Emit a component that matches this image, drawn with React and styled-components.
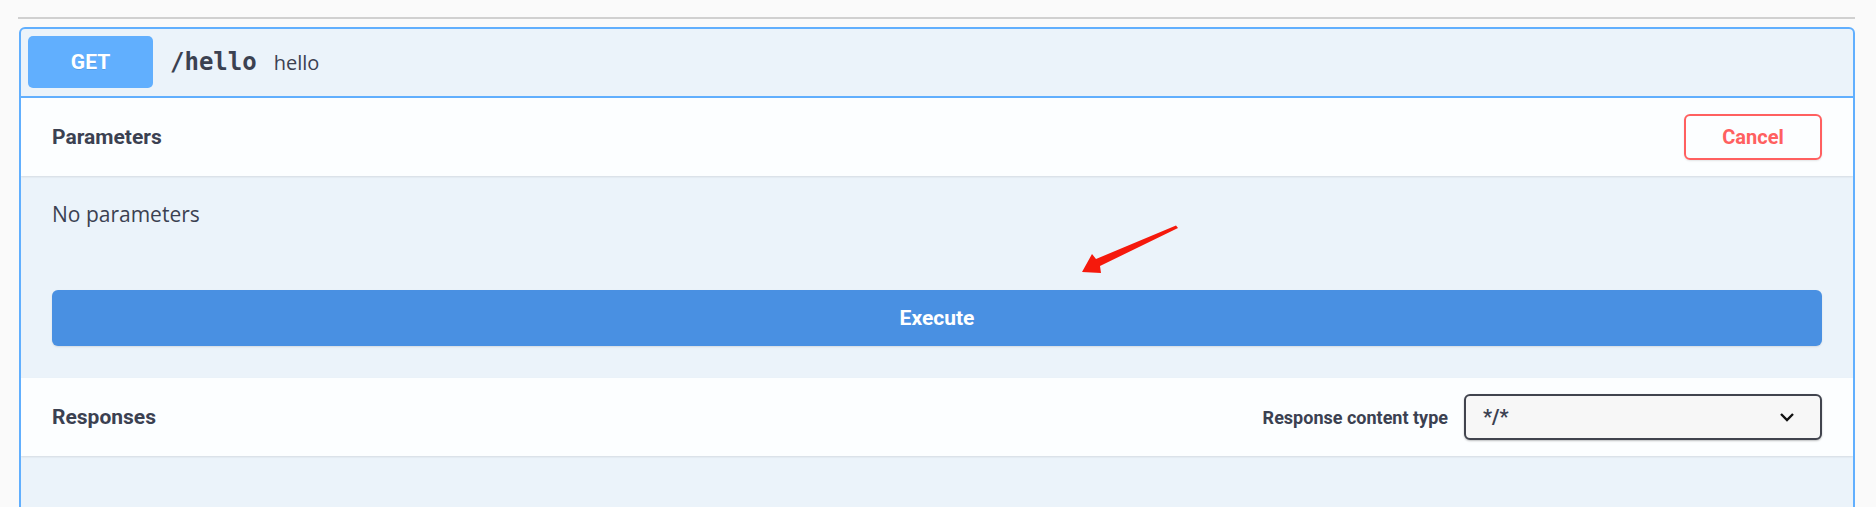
import React from 'react'
import styled, { createGlobalStyle } from 'styled-components'

const GlobalStyle = createGlobalStyle`
  html, body {
    margin: 0;
    padding: 0;
    background: #fafafa;
  }
`;

const Page = styled.div`
  position: relative;
  padding: 17px 21px 0 18px;
  height: 507px;
  box-sizing: border-box;
  overflow: hidden;
  font-family: "Open Sans", sans-serif;
  color: #3b4151;
`;

const Divider = styled.div`
  height: 2px;
  background: #d0d0d0;
`;

const Opblock = styled.div`
  margin: 8px 0 0 1px;
  border: 2px solid #61affe;
  border-radius: 6px;
  background: #ebf3fa;
  height: 600px;
  overflow: hidden;
`;

const Summary = styled.div`
  display: flex;
  align-items: center;
  padding: 7px 7px 8px;
  border-bottom: 2px solid #61affe;
`;

const Method = styled.span`
  display: flex;
  align-items: center;
  justify-content: center;
  width: 125px;
  height: 52px;
  border-radius: 5px;
  background: #61affe;
  color: #fff;
  font-family: Roboto, sans-serif;
  font-weight: 700;
  font-size: 21px;
  text-shadow: 0 1px 0 rgba(0, 0, 0, 0.1);
`;

const Path = styled.span`
  margin-left: 17px;
  font-family: "DejaVu Sans Mono", monospace;
  font-weight: 700;
  font-size: 24px;
  color: #3b4151;
`;

const Description = styled.span`
  margin-left: 17px;
  font-size: 20px;
  color: #3b4151;
`;

const SectionHeader = styled.div`
  display: flex;
  align-items: center;
  justify-content: space-between;
  height: 78px;
  padding: 0 31px;
  background: rgba(255, 255, 255, 0.85);
  box-shadow: 0 1px 2px rgba(0, 0, 0, 0.1);
`;

const Title = styled.h4`
  margin: 0;
  font-family: Roboto, sans-serif;
  font-weight: 700;
  font-size: 21px;
  color: #3b4151;
`;

const CancelButton = styled.button`
  width: 138px;
  height: 46px;
  border: 2px solid #ff6060;
  border-radius: 6px;
  background: transparent;
  color: #ff6060;
  font-family: Roboto, sans-serif;
  font-weight: 700;
  font-size: 20px;
  box-shadow: 0 1px 2px rgba(0, 0, 0, 0.1);
`;

const Body = styled.div`
  padding: 22px 31px 32px;
`;

const Note = styled.p`
  margin: 0;
  font-size: 21px;
  line-height: 32px;
`;

const ExecuteButton = styled.button`
  display: block;
  width: 100%;
  height: 56px;
  margin-top: 60px;
  border: none;
  border-radius: 6px;
  background: #4990e2;
  color: #fff;
  font-family: Roboto, sans-serif;
  font-weight: 700;
  font-size: 21px;
  box-shadow: 0 1px 2px rgba(0, 0, 0, 0.1);
`;

const ContentType = styled.div`
  display: flex;
  align-items: center;
  gap: 16px;
`;

const Label = styled.label`
  font-family: Roboto, sans-serif;
  font-weight: 700;
  font-size: 18px;
  color: #3b4151;
`;

const Select = styled.div`
  display: flex;
  align-items: center;
  justify-content: space-between;
  box-sizing: border-box;
  width: 358px;
  height: 46px;
  padding: 0 25px 0 17px;
  border: 2px solid #41444e;
  border-radius: 6px;
  background: #f7f7f7;
  box-shadow: 0 1px 2px rgba(0, 0, 0, 0.25);
  font-family: Roboto, sans-serif;
  font-weight: 700;
  font-size: 20px;
  color: #3b4151;
`;

const Arrow = styled.svg`
  position: absolute;
  left: 1070px;
  top: 215px;
`;

const Chevron = () => (
  <svg width="16" height="10" viewBox="0 0 16 10">
    <polyline points="2,2 8,8 14,2" fill="none" stroke="#111" strokeWidth="2.4" />
  </svg>
)

export default function App() {
  return (
    <Page>
      <GlobalStyle />
      <Divider />
      <Opblock>
        <Summary>
          <Method>GET</Method>
          <Path>/hello</Path>
          <Description>hello</Description>
        </Summary>

        <SectionHeader>
          <Title>Parameters</Title>
          <CancelButton>Cancel</CancelButton>
        </SectionHeader>

        <Body>
          <Note>No parameters</Note>
          <ExecuteButton>Execute</ExecuteButton>
        </Body>

        <SectionHeader>
          <Title>Responses</Title>
          <ContentType>
            <Label>Response content type</Label>
            <Select>
              <span>*/*</span>
              <Chevron />
            </Select>
          </ContentType>
        </SectionHeader>
      </Opblock>

      <Arrow width="120" height="70" viewBox="0 0 120 70">
        <polygon
          points="106,10.5 26,44 22,39 12,57 31,58 30,51 108,13"
          fill="#f5190c"
        />
      </Arrow>
    </Page>
  )
}
